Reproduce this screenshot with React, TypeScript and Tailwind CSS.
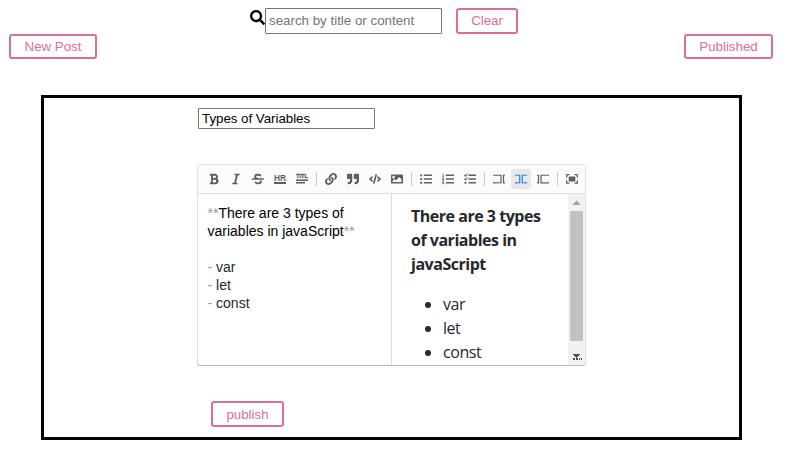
import React from "react";
import {
  FaSearch, FaBold, FaItalic, FaStrikethrough, FaLink, FaQuoteRight,
  FaCode, FaImage, FaListUl, FaListOl, FaTasks,
} from "react-icons/fa";

function PinkButton({ children, className }: { children: React.ReactNode; className: string }) {
  return (
    <button className={`box-border flex items-center justify-center rounded-[3px] border-2 border-[#db7093] bg-white text-[13.333px] leading-[15px] tracking-[-0.02px] text-[#db7093] ${className}`}>
      {children}
    </button>
  );
}

function Tool({ children, active = false }: { children: React.ReactNode; active?: boolean }) {
  return (
    <button className={`mx-px flex h-5 w-5 items-center justify-center rounded-[2px] ${active ? "bg-[#e8e8e8] text-[#2a84dc]" : "text-[#57606a]"}`}>
      {children}
    </button>
  );
}

function Divider() {
  return <span className="mx-[3px] h-3.5 w-px bg-[#c8ccd1]" />;
}

function HrIcon() {
  return (
    <svg width="12" height="12" viewBox="0 0 12 12" fill="currentColor" overflow="visible">
      <text x="0" y="8" fontSize="8.6" fontWeight="700" fontFamily="Liberation Sans, Arial, sans-serif" textLength="12" lengthAdjust="spacingAndGlyphs">HR</text>
      <rect x="0" y="9" width="12" height="2" />
    </svg>
  );
}

function TitleIcon() {
  return (
    <svg width="12" height="12" viewBox="0 0 12 12" fill="currentColor" overflow="visible">
      <text x="0" y="5.4" fontSize="6.2" fontWeight="700" stroke="currentColor" strokeWidth="0.3" fontFamily="Liberation Sans, Arial, sans-serif" textLength="12" lengthAdjust="spacingAndGlyphs">TITL</text>
      <rect x="0" y="6.5" width="12" height="1.5" />
      <rect x="0" y="9" width="9" height="1.5" />
    </svg>
  );
}

function PaneIcon({ points }: { points: string[] }) {
  return (
    <svg width="12" height="12" viewBox="0 0 520 520" fill="currentColor">
      {points.map((p) => <polygon key={p} points={p} />)}
    </svg>
  );
}

const editPane = [
  "0 71.293 0 122 319 122 319 397 0 397 0 449.707 372 449.413 372 71.293",
  "429 71.293 520 71.293 520 122 481 123 481 396 520 396 520 449.707 429 449.413",
];
const livePane = [
  "0 71.293 0 122 179 122 179 397 0 397 0 449.707 232 449.413 232 71.293",
  "289 71.293 520 71.293 520 122 341 123 341 396 520 396 520 449.707 289 449.413",
];
const previewPane = [
  "0 71.293 0 122 38.023 123 38.023 398 0 397 0 449.707 91.023 450.413 91.023 72.293",
  "148.023 72.293 520 71.293 520 122 200.023 124 200.023 397 520 396 520 449.707 148.023 450.413",
];

function FullscreenIcon() {
  return (
    <svg width="12" height="12" viewBox="0 0 520 520" fill="currentColor">
      <path d="M118 171.133334L118 342.200271C118 353.766938 126.675 365.333605 141.133333 365.333605L382.634614 365.333605C394.201281 365.333605 405.767948 356.658605 405.767948 342.200271L405.767948 171.133334C405.767948 159.566667 397.092948 148 382.634614 148L141.133333 148C126.674999 148 117.999999 156.675 118 171.133334zM465.353591 413.444444L370 413.444444 370 471.222222 474.0221 471.222222C500.027624 471.222222 520.254143 451 520.254143 425L520.254143 321 462.464089 321 462.464089 413.444444 465.353591 413.444444zM471.0221 43L367 43 367 100.777778 462.353591 100.777778 462.353591 196.111111 520.143647 196.111111 520.143647 89.2222219C517.254144 63.2222219 497.027624 43 471.0221 43zM57.7900547 100.777778L153.143646 100.777778 153.143646 43 46.2320439 43C20.2265191 43 0 63.2222219 0 89.2222219L0 193.222222 57.7900547 193.222222 57.7900547 100.777778zM57.7900547 321L0 321 0 425C0 451 20.2265191 471.222222 46.2320439 471.222223L150.254143 471.222223 150.254143 413.444445 57.7900547 413.444445 57.7900547 321z" />
    </svg>
  );
}

function Toolbar() {
  return (
    <div className="flex h-[29px] shrink-0 items-center border-b border-[#dcdfe3] bg-[#fbfbfb] pl-[5px]">
      <Tool><FaBold size={12} /></Tool>
      <Tool><FaItalic size={12} /></Tool>
      <Tool><FaStrikethrough size={12} /></Tool>
      <Tool><HrIcon /></Tool>
      <Tool><TitleIcon /></Tool>
      <Divider />
      <Tool><FaLink size={12} /></Tool>
      <Tool><FaQuoteRight size={12} /></Tool>
      <Tool><FaCode size={12} /></Tool>
      <Tool><FaImage size={12} /></Tool>
      <Divider />
      <Tool><FaListUl size={12} /></Tool>
      <Tool><FaListOl size={12} /></Tool>
      <Tool><FaTasks size={12} /></Tool>
      <Divider />
      <Tool><PaneIcon points={editPane} /></Tool>
      <Tool active><PaneIcon points={livePane} /></Tool>
      <Tool><PaneIcon points={previewPane} /></Tool>
      <Divider />
      <Tool><FullscreenIcon /></Tool>
    </div>
  );
}

function Mark({ children }: { children: React.ReactNode }) {
  return <span className="text-[#999999]">{children}</span>;
}

function Scrollbar() {
  return (
    <div className="flex w-[17px] shrink-0 flex-col items-center bg-[#f1f1f1]">
      <svg className="h-[17px] w-[17px] shrink-0" viewBox="0 0 17 17"><path d="M8.5 6.5 L12.5 11 H4.5 Z" fill="#a3a3a3" /></svg>
      <div className="h-[130px] w-[13px] shrink-0 bg-[#c1c1c1]" />
      <svg className="h-[24px] w-[17px] shrink-0" viewBox="0 0 17 24" shapeRendering="crispEdges">
        <path d="M5 13h7v1h-1v1h-1v1H9v1H8v-1H7v-1H6v-1H5z" fill="#505050" />
        <path d="M5 17h2v2H5zM8 17h2v2H8zM11 17h1v2h-1zM13 17h1v2h-1z" fill="#505050" />
      </svg>
    </div>
  );
}

function Editor() {
  return (
    <div className="flex h-[202px] w-[389px] flex-col overflow-hidden rounded-[3px] bg-white p-px shadow-[inset_0_-1px_0_#b8b8b8,inset_0_0_0_1px_#dfe1e4]">
      <Toolbar />
      <div className="flex min-h-0 flex-1">
        <div className="w-[193px] shrink-0 pt-[10px] pl-[9.5px] text-[14px] leading-[18px] text-black">
          <div><Mark>**</Mark>There are 3 types of</div>
          <div>variables in javaScript<Mark>**</Mark></div>
          <div className="mt-[18px] text-[#24292f]"><Mark>-</Mark> var</div>
          <div className="text-[#24292f]"><Mark>-</Mark> let</div>
          <div className="text-[#24292f]"><Mark>-</Mark> const</div>
        </div>
        <div className="min-w-0 flex-1 overflow-hidden border-l border-[#d8dbdf] pt-[10px] pl-[19px] font-['Open_Sans','Noto_Sans',sans-serif] text-[16px] leading-6 text-[#24292f]">
          <div className="whitespace-nowrap font-bold tracking-[-0.48px]">
            <div>There are 3 types</div>
            <div>of variables in</div>
            <div>javaScript</div>
          </div>
          <ul className="mt-4 list-disc pl-8 tracking-[-0.45px]">
            <li>var</li>
            <li>let</li>
            <li>const</li>
          </ul>
        </div>
        <Scrollbar />
      </div>
    </div>
  );
}

export default function App() {
  return (
    <div className="h-[461px] w-[789px] overflow-hidden bg-white pt-2 font-['Liberation_Sans',Arial,sans-serif]">
      <div className="flex h-[26px] pl-[250px]">
        <FaSearch size={15} className="mt-[1.5px] shrink-0 text-black" />
        <input
          className="h-[26px] w-[177px] shrink-0 rounded-[1px] border border-[#767676] px-[3px] pb-[2px] text-[13.333px] placeholder:text-[#757575]"
          placeholder="search by title or content"
        />
        <PinkButton className="ml-[14px] h-[26px] w-[62px] pb-px">Clear</PinkButton>
      </div>
      <div className="flex justify-between pr-4 pl-[9px]">
        <PinkButton className="h-[25px] w-[88px]">New Post</PinkButton>
        <PinkButton className="h-[25px] w-[89px]">Published</PinkButton>
      </div>
      <main className="mt-9 ml-[41px] flex h-[345px] w-[701px] flex-col items-start border-[3px] border-black pt-[10px] pl-[153px]">
        <input
          className="ml-px h-[21px] w-[177px] shrink-0 rounded-[1px] border border-[#767676] px-[3px] text-[13.333px] tracking-[-0.03px] text-black"
          defaultValue="Types of Variables"
        />
        <div className="mt-[35px]"><Editor /></div>
        <PinkButton className="mt-[35px] ml-[14px] h-[26px] w-[73px]">publish</PinkButton>
      </main>
    </div>
  );
}
